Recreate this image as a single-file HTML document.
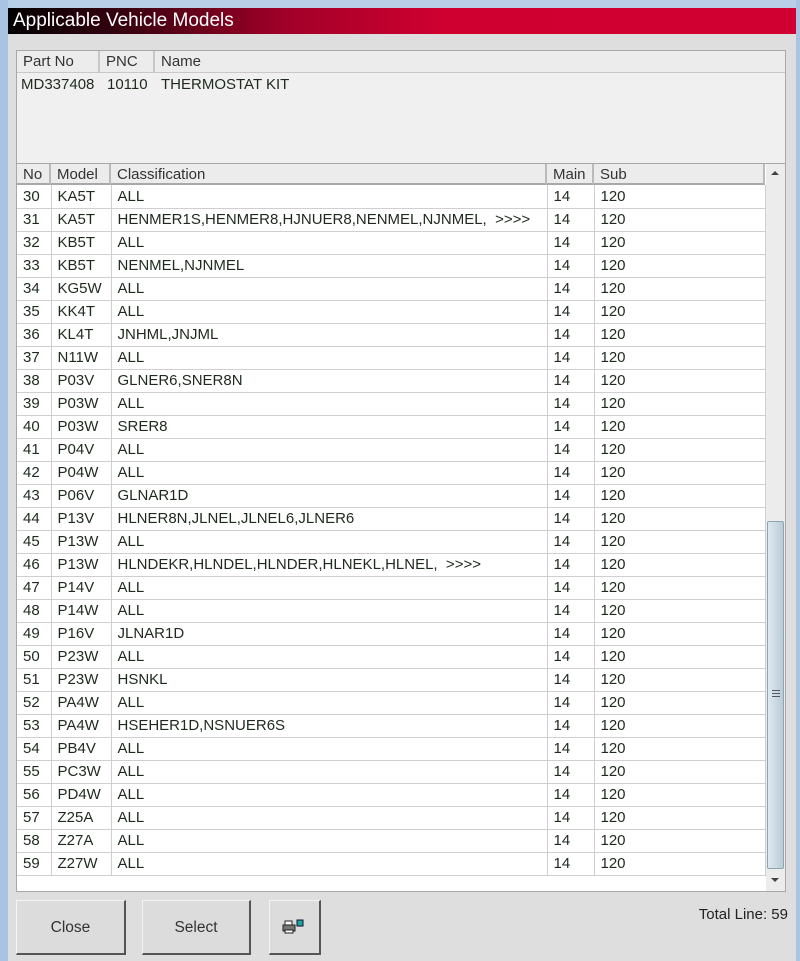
<!DOCTYPE html>
<html><head><meta charset="utf-8"><style>
*{margin:0;padding:0;box-sizing:border-box}
body{width:800px;height:961px;background:#dedede;position:relative;overflow:hidden;font-family:"Liberation Sans",Arial,sans-serif;color:#1e2a1e}
.lb{position:absolute;left:0;top:0;width:8px;height:961px;background:#a9c4e3}
.rb{position:absolute;right:0;top:0;width:4px;height:961px;background:#a9c4e3}
.tb{position:absolute;left:0;top:0;width:800px;height:8px;background:#b9cfe8}
.title{position:absolute;left:8px;top:8px;width:788px;height:26px;background:linear-gradient(90deg,#000 0%,#3a0010 15%,#a00028 35%,#cf0030 55%,#d00030 100%);color:#fff;font-size:19px;line-height:26px;padding-left:5px}
.top{position:absolute;left:16px;top:50px;width:770px;height:114px;background:#f0f0f0;border:1px solid #a8a8a8}
.th{position:absolute;top:0;height:22px;background:#ececec;border-right:2px solid #c8c8c8;border-bottom:1px solid #c8c8c8;font-size:15px;line-height:22px;padding-left:6px;color:#333}
.tx{position:absolute;top:24px;font-size:15px;line-height:20px}
.grid{position:absolute;left:16px;top:163px;width:770px;height:729px;background:#fff;border:1px solid #a8a8a8}
.hd{position:absolute;top:0;height:21px;background:#ececec;border-bottom:2px solid #a8a8a8;border-right:2px solid #bbb;font-size:15px;line-height:21px;padding-left:6px;color:#333}
table{position:absolute;left:0;top:21px;border-collapse:collapse;table-layout:fixed;width:748px}
td{height:23px;border-bottom:1px solid #cfcfcf;border-right:1px solid #cfcfcf;font-size:15px;padding-left:6px;white-space:nowrap;overflow:hidden;vertical-align:middle}
.sb{position:absolute;left:749px;top:0;width:19px;height:727px;background:#ececec}
.thumb{position:absolute;left:1px;top:357px;width:17px;height:348px;background:linear-gradient(90deg,#dfe9f1,#b8cbd6);border:1px solid #8ea4b3;border-radius:2px}
.btn{position:absolute;top:900px;height:55px;background:#dcdcdc;border-top:1px solid #f4f4f4;border-left:1px solid #f4f4f4;border-right:2px solid #555;border-bottom:2px solid #555;font-size:15.5px;text-align:center;line-height:54px;color:#333}
</style></head><body>
<div class="tb"></div><div class="lb"></div><div class="rb"></div>
<div class="title">Applicable Vehicle Models</div>
<div class="top">
<div class="th" style="left:0;width:83px">Part No</div>
<div class="th" style="left:83px;width:55px">PNC</div>
<div class="th" style="left:138px;width:630px;border-right:none">Name</div>
<div class="tx" style="left:4px">MD337408</div>
<div class="tx" style="left:90px">10110</div>
<div class="tx" style="left:144px">THERMOSTAT KIT</div>
</div>
<div class="grid">
<div class="hd" style="left:0;width:34px">No</div>
<div class="hd" style="left:34px;width:60px">Model</div>
<div class="hd" style="left:94px;width:436px">Classification</div>
<div class="hd" style="left:530px;width:47px">Main</div>
<div class="hd" style="left:577px;width:171px">Sub</div>
<table>
<colgroup><col style="width:34px"><col style="width:60px"><col style="width:436px"><col style="width:47px"><col style="width:171px"></colgroup>
<tr><td>30</td><td>KA5T</td><td>ALL</td><td>14</td><td>120</td></tr>
<tr><td>31</td><td>KA5T</td><td>HENMER1S,HENMER8,HJNUER8,NENMEL,NJNMEL, &nbsp;&gt;&gt;&gt;&gt;</td><td>14</td><td>120</td></tr>
<tr><td>32</td><td>KB5T</td><td>ALL</td><td>14</td><td>120</td></tr>
<tr><td>33</td><td>KB5T</td><td>NENMEL,NJNMEL</td><td>14</td><td>120</td></tr>
<tr><td>34</td><td>KG5W</td><td>ALL</td><td>14</td><td>120</td></tr>
<tr><td>35</td><td>KK4T</td><td>ALL</td><td>14</td><td>120</td></tr>
<tr><td>36</td><td>KL4T</td><td>JNHML,JNJML</td><td>14</td><td>120</td></tr>
<tr><td>37</td><td>N11W</td><td>ALL</td><td>14</td><td>120</td></tr>
<tr><td>38</td><td>P03V</td><td>GLNER6,SNER8N</td><td>14</td><td>120</td></tr>
<tr><td>39</td><td>P03W</td><td>ALL</td><td>14</td><td>120</td></tr>
<tr><td>40</td><td>P03W</td><td>SRER8</td><td>14</td><td>120</td></tr>
<tr><td>41</td><td>P04V</td><td>ALL</td><td>14</td><td>120</td></tr>
<tr><td>42</td><td>P04W</td><td>ALL</td><td>14</td><td>120</td></tr>
<tr><td>43</td><td>P06V</td><td>GLNAR1D</td><td>14</td><td>120</td></tr>
<tr><td>44</td><td>P13V</td><td>HLNER8N,JLNEL,JLNEL6,JLNER6</td><td>14</td><td>120</td></tr>
<tr><td>45</td><td>P13W</td><td>ALL</td><td>14</td><td>120</td></tr>
<tr><td>46</td><td>P13W</td><td>HLNDEKR,HLNDEL,HLNDER,HLNEKL,HLNEL, &nbsp;&gt;&gt;&gt;&gt;</td><td>14</td><td>120</td></tr>
<tr><td>47</td><td>P14V</td><td>ALL</td><td>14</td><td>120</td></tr>
<tr><td>48</td><td>P14W</td><td>ALL</td><td>14</td><td>120</td></tr>
<tr><td>49</td><td>P16V</td><td>JLNAR1D</td><td>14</td><td>120</td></tr>
<tr><td>50</td><td>P23W</td><td>ALL</td><td>14</td><td>120</td></tr>
<tr><td>51</td><td>P23W</td><td>HSNKL</td><td>14</td><td>120</td></tr>
<tr><td>52</td><td>PA4W</td><td>ALL</td><td>14</td><td>120</td></tr>
<tr><td>53</td><td>PA4W</td><td>HSEHER1D,NSNUER6S</td><td>14</td><td>120</td></tr>
<tr><td>54</td><td>PB4V</td><td>ALL</td><td>14</td><td>120</td></tr>
<tr><td>55</td><td>PC3W</td><td>ALL</td><td>14</td><td>120</td></tr>
<tr><td>56</td><td>PD4W</td><td>ALL</td><td>14</td><td>120</td></tr>
<tr><td>57</td><td>Z25A</td><td>ALL</td><td>14</td><td>120</td></tr>
<tr><td>58</td><td>Z27A</td><td>ALL</td><td>14</td><td>120</td></tr>
<tr><td>59</td><td>Z27W</td><td>ALL</td><td>14</td><td>120</td></tr>
</table>
<div class="sb">
<div style="position:absolute;left:5px;top:7px;width:0;height:0;border-left:4px solid transparent;border-right:4px solid transparent;border-bottom:4px solid #444"></div>
<div class="thumb"><div style="position:absolute;left:4px;top:168px;width:8px;height:7px;border-top:1px solid #556;border-bottom:1px solid #556"><div style="margin-top:2px;border-top:1px solid #556"></div></div></div>
<div style="position:absolute;left:5px;top:714px;width:0;height:0;border-left:4px solid transparent;border-right:4px solid transparent;border-top:4px solid #444"></div>
</div>
</div>
<div class="btn" style="left:16px;width:110px">Close</div>
<div class="btn" style="left:142px;width:109px">Select</div>
<div class="btn" style="left:269px;width:52px">
<svg width="22" height="16" viewBox="0 0 22 16" style="position:absolute;left:12px;top:18px">
<rect x="3" y="2" width="7" height="5" fill="#fff" stroke="#222"/>
<rect x="1" y="6" width="12" height="6" fill="#777" stroke="#222"/>
<rect x="3" y="11" width="8" height="3" fill="#fff" stroke="#222"/>
<rect x="15" y="1" width="6" height="6" fill="#1aa89a" stroke="#113"/>
</svg></div>
<div style="position:absolute;right:12px;top:906px;font-size:15px;color:#222">Total Line: 59</div>
</body></html>
